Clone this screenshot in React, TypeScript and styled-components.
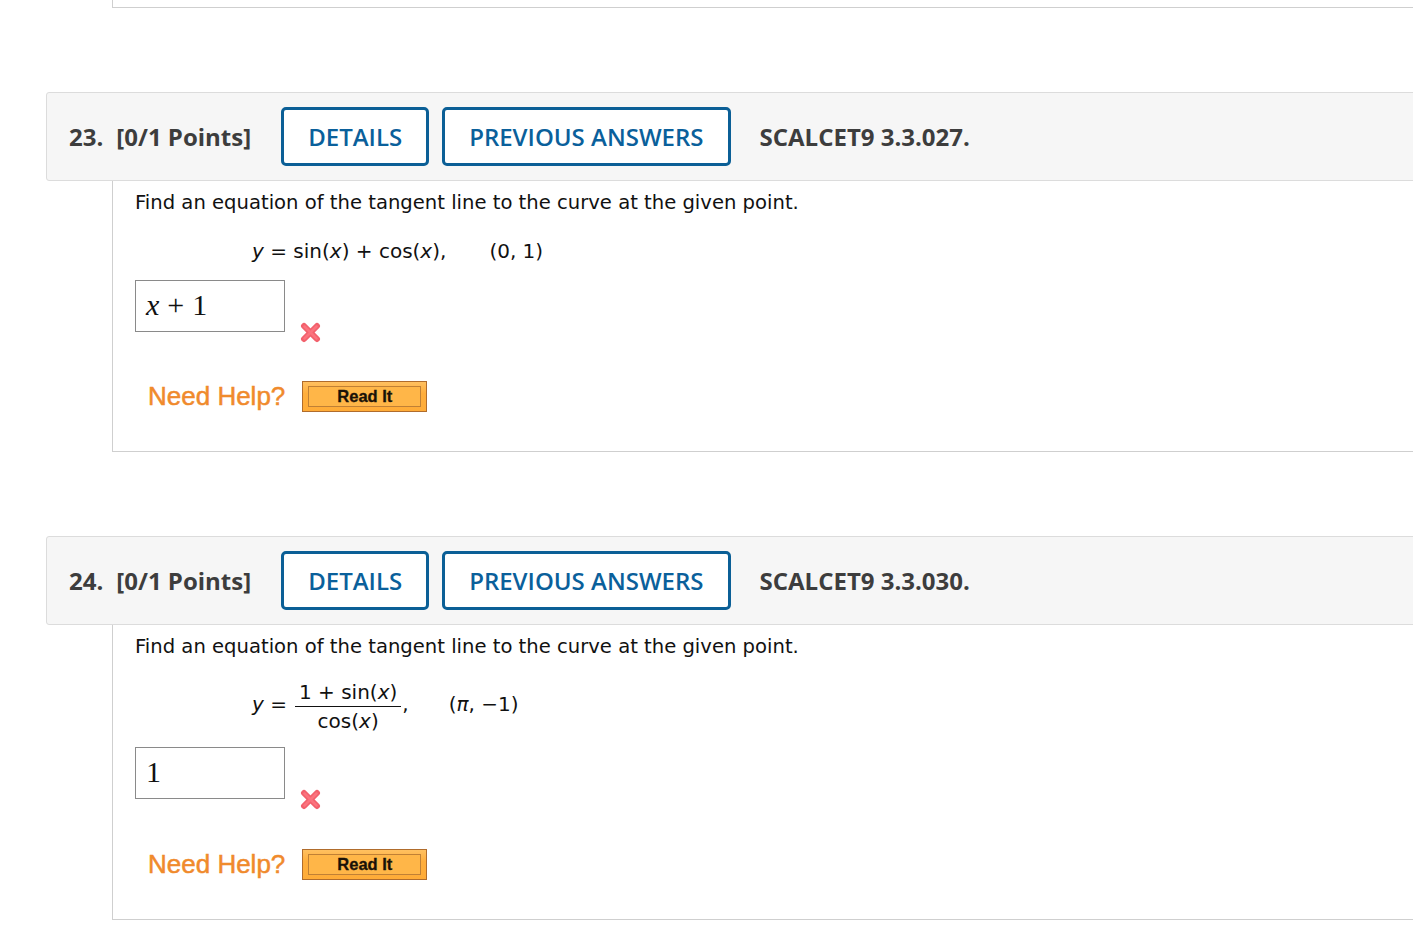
import React from "react";
import styled, { createGlobalStyle } from "styled-components";

const Global = createGlobalStyle`
  html, body { margin: 0; padding: 0; background: #fff; overflow: hidden; }
  body { font-family: "DejaVu Sans", Verdana, sans-serif; }
`;

const Page = styled.div`
  width: 1700px;
  padding-left: 46px;
`;

const PrevBody = styled.div`
  margin-left: 66px;
  height: 7px;
  border-left: 1px solid #cfcfcf;
  border-bottom: 1px solid #cfcfcf;
`;

const Question = styled.section`
  margin-top: 84px;
`;

const Header = styled.header`
  display: flex;
  align-items: center;
  height: 87px;
  background: #f6f6f6;
  border: 1px solid #dcdcdc;
  border-radius: 3px 0 0 3px;
  padding-left: 22px;
  font-family: "Open Sans", sans-serif;
  font-weight: 700;
  font-size: 24px;
  color: #3d3d3d;
`;

const Num = styled.span`
  margin-right: 13px;
`;

const Points = styled.span`
  margin-right: 30px;
`;

const OutlineButton = styled.button`
  height: 59px;
  padding: 0 24px;
  margin-right: 13px;
  background: #fff;
  border: 3px solid #0b5f96;
  border-radius: 5px;
  font-family: "Open Sans", sans-serif;
  font-weight: 600;
  font-size: 24px;
  color: #0a609b;
  cursor: pointer;
`;

const Code = styled.span`
  margin-left: 16px;
`;

const Body = styled.div<{ $h: number }>`
  margin-left: 66px;
  border-left: 1px solid #cfcfcf;
  border-bottom: 1px solid #cfcfcf;
  padding: 10px 0 0 22px;
  height: ${(p) => p.$h}px;
  box-sizing: border-box;
  color: #111;
`;

const Prompt = styled.p`
  margin: 0;
  line-height: 23px;
  font-size: 19.6px;
`;

const MathLine = styled.div<{ $mt: number }>`
  display: flex;
  align-items: center;
  margin-left: 117px;
  margin-top: ${(p) => p.$mt}px;
  line-height: 24px;
  font-size: 20px;
  white-space: pre;
`;

const Var = styled.i`
  font-style: oblique;
`;

const Gap = styled.span<{ $w: number }>`
  display: inline-block;
  width: ${(p) => p.$w}px;
`;

const Frac = styled.span`
  display: inline-flex;
  flex-direction: column;
  align-items: center;
  margin: 6px 1px 0 8px;
`;

const Numer = styled.span`
  padding: 0 4px 2px;
  border-bottom: 1px solid #111;
`;

const Denom = styled.span`
  padding-top: 2px;
`;

const AnswerRow = styled.div<{ $mt: number }>`
  display: flex;
  align-items: flex-start;
  margin-top: ${(p) => p.$mt}px;
`;

const AnswerBox = styled.div`
  width: 150px;
  height: 52px;
  border: 1px solid #8a8a8a;
  padding: 7px 0 0 10px;
  box-sizing: border-box;
  font-family: "Liberation Serif", "DejaVu Serif", serif;
  font-size: 30px;
  line-height: 34px;
  color: #111;
  white-space: pre;
`;

const MathOp = styled.span`
  margin: 0 8px;
`;

const WrongMark = styled.svg`
  width: 21px;
  height: 21px;
  margin-left: 15px;
  margin-top: 42px;
`;

const HelpRow = styled.div<{ $mt: number }>`
  display: flex;
  align-items: center;
  margin-top: ${(p) => p.$mt}px;
  margin-left: 13px;
`;

const NeedHelp = styled.span`
  font-family: "Liberation Sans", Arial, sans-serif;
  font-size: 26px;
  font-weight: 400;
  color: #f08a2c;
  -webkit-text-stroke: 0.5px #f08a2c;
  margin-right: 17px;
`;

const ReadIt = styled.button`
  width: 125px;
  height: 31px;
  padding: 4px 5px;
  background: linear-gradient(#ffc060, #ffae3c 40%, #ffac38);
  border: 1px solid #b06c2c;
  box-sizing: border-box;
  cursor: pointer;
`;

const ReadItInner = styled.span`
  display: flex;
  align-items: center;
  justify-content: center;
  height: 100%;
  border: 1px solid #c08035;
  background: #ffb648;
  font-family: "Liberation Sans", Arial, sans-serif;
  font-weight: 700;
  font-size: 16.5px;
  color: #1a1208;
  -webkit-text-stroke: 0.3px #1a1208;
  box-sizing: border-box;
`;

const Cross = () => (
  <WrongMark viewBox="0 0 21 21">
    <g stroke="#f2606c" strokeWidth="6" strokeLinecap="round">
      <line x1="4" y1="4" x2="17" y2="17" />
      <line x1="17" y1="4" x2="4" y2="17" />
    </g>
    <g stroke="#ff7c86" strokeWidth="2.5" strokeLinecap="round" opacity="0.7">
      <line x1="4.5" y1="4.5" x2="16.5" y2="16.5" />
      <line x1="16.5" y1="4.5" x2="4.5" y2="16.5" />
    </g>
  </WrongMark>
);

type Q = { n: number; code: string };

const QHeader = ({ n, code }: Q) => (
  <Header>
    <Num>{n}.</Num>
    <Points>[0/1 Points]</Points>
    <OutlineButton>DETAILS</OutlineButton>
    <OutlineButton>PREVIOUS ANSWERS</OutlineButton>
    <Code>{code}</Code>
  </Header>
);

const Help = ({ mt }: { mt: number }) => (
  <HelpRow $mt={mt}>
    <NeedHelp>Need Help?</NeedHelp>
    <ReadIt>
      <ReadItInner>Read It</ReadItInner>
    </ReadIt>
  </HelpRow>
);

export default function App() {
  return (
    <>
      <Global />
      <Page>
        <PrevBody />
        <Question>
          <QHeader n={23} code="SCALCET9 3.3.027." />
          <Body $h={271}>
            <Prompt>Find an equation of the tangent line to the curve at the given point.</Prompt>
            <MathLine $mt={25}>
              <Var>y</Var> = sin(<Var>x</Var>) + cos(<Var>x</Var>),
              <Gap $w={43} />
              (0, 1)
            </MathLine>
            <AnswerRow $mt={17}>
              <AnswerBox>
                <i>x</i>
                <MathOp>+</MathOp>1
              </AnswerBox>
              <Cross />
            </AnswerRow>
            <Help mt={38} />
          </Body>
        </Question>
        <Question>
          <QHeader n={24} code="SCALCET9 3.3.030." />
          <Body $h={295}>
            <Prompt>Find an equation of the tangent line to the curve at the given point.</Prompt>
            <MathLine $mt={16}>
              <Var>y</Var> =
              <Frac>
                <Numer>
                  1 + sin(<Var>x</Var>)
                </Numer>
                <Denom>
                  cos(<Var>x</Var>)
                </Denom>
              </Frac>
              ,
              <Gap $w={40} />
              (<Var>π</Var>, −1)
            </MathLine>
            <AnswerRow $mt={14}>
              <AnswerBox>1</AnswerBox>
              <Cross />
            </AnswerRow>
            <Help mt={39} />
          </Body>
        </Question>
      </Page>
    </>
  );
}
